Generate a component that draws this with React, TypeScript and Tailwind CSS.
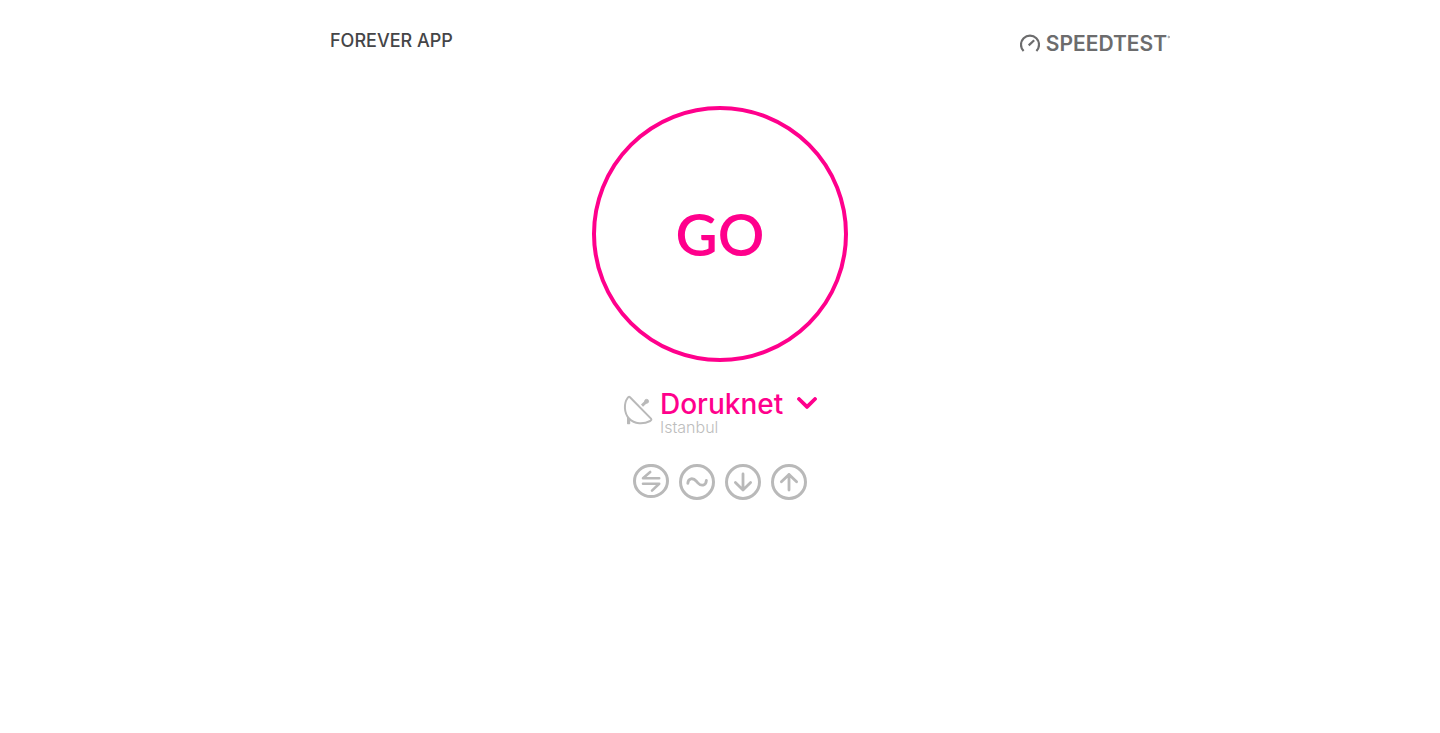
import React, { useState } from 'react';

const servers = [{ id: 'doruknet', name: 'Doruknet', city: 'Istanbul' }];

function GaugeIcon() {
  return (
    <svg className="h-5 w-5" viewBox="0 0 20 20" fill="none" stroke="currentColor" strokeWidth="2.2" aria-hidden="true">
      <path d="M3.6 17A9 9 0 1 1 16.4 17" />
      <path d="M8.7 11.4L14.2 6.2" />
    </svg>
  );
}

function DishIcon() {
  return (
    <svg className="h-8 w-8 text-[#b9b9b9]" viewBox="0 0 32 32" fill="none" stroke="currentColor" aria-hidden="true">
      <path
        d="M9 4.2L30 25.6C30.8 26.6 30.2 27.4 29.2 28C22.5 31.4 13.5 31.4 8 25.5C3 20 2.6 10.5 6.6 5C7.4 3.9 8.1 3.3 9 4.2Z"
        strokeWidth="2"
        strokeLinejoin="round"
      />
      <path d="M6.6 24.5V30.6H8.6V26.5Z" fill="currentColor" strokeWidth="1.2" strokeLinejoin="round" />
      <path d="M21 12.6L25 8.8" strokeWidth="3" />
      <circle cx="25.6" cy="8.3" r="2" fill="currentColor" strokeWidth="0.8" />
    </svg>
  );
}

function ConnectionsIcon() {
  return (
    <svg className="h-9 w-9" viewBox="0 0 36 36" fill="none" stroke="currentColor" role="img" aria-label="Connections">
      <ellipse cx="18" cy="17" rx="16.5" ry="15.6" strokeWidth="3" />
      <path d="M26.2 14.2H10L17.2 8M10 19.8H26.2L19 26.6" strokeWidth="2.6" strokeLinecap="round" strokeLinejoin="round" />
    </svg>
  );
}

const stages = [
  { id: 'ping', label: 'Ping', path: 'M8.8 19.4C9.2 13.8 14.2 13.6 17.4 17.2L18.8 18.8C22 22.4 27 22 27.4 16.4' },
  { id: 'download', label: 'Download', path: 'M18 10V26M10.4 18.6L18 26L25.6 18.6' },
  { id: 'upload', label: 'Upload', path: 'M18 26V10.4M10.4 17.8L18 10.4L25.6 17.8' },
];

export default function App() {
  const [server, setServer] = useState(servers[0]);

  return (
    <div className="min-h-screen bg-white font-['Inter',sans-serif]">
      <header className="mx-auto flex max-w-[900px] items-start justify-between pt-7 pl-15">
        <h1 className="text-lg leading-[26px] font-medium text-[#454547]">FOREVER APP</h1>
        <a href="#" className="flex items-center gap-1.5 pt-[3px] text-[#6c6c6d]">
          <GaugeIcon />
          <span className="flex items-start">
            <span className="text-[21px] leading-[26px] font-semibold">SPEEDTEST</span>
            <svg className="mt-1 h-1 w-[3px]" viewBox="0 0 3 4" fill="none" stroke="currentColor" strokeWidth="0.6" aria-hidden="true">
              <circle cx="1.8" cy="2" r="0.8" />
            </svg>
          </span>
        </a>
      </header>

      <main className="flex flex-col items-center pt-[49px]">
        <button
          type="button"
          className="h-64 w-64 rounded-full border-4 border-[#ff008c] font-['Lato',sans-serif] text-[58px] leading-none font-semibold text-[#ff008c]"
        >
          GO
        </button>

        <div className="mt-7 flex items-start gap-1.5">
          <div className="pt-[3px]">
            <DishIcon />
          </div>
          <div>
            <div className="relative">
              <select
                aria-label="Server"
                value={server.id}
                onChange={(e) => setServer(servers.find((s) => s.id === e.target.value) ?? servers[0])}
                className="block w-40 appearance-none bg-transparent pl-px text-[28px] leading-7 font-medium text-[#ff008c]"
              >
                {servers.map((s) => (
                  <option key={s.id} value={s.id}>
                    {s.name}
                  </option>
                ))}
              </select>
              <svg
                className="pointer-events-none absolute top-[7px] right-0.5 h-3 w-5"
                viewBox="0 0 20 12"
                fill="none"
                stroke="#ff008c"
                strokeWidth="3.8"
                strokeLinecap="round"
                strokeLinejoin="round"
                aria-hidden="true"
              >
                <path d="M2 2L10 9.9L18 2" />
              </svg>
            </div>
            <p className="pl-px text-base leading-[18px] font-light text-[#bdbdbd]">{server.city}</p>
          </div>
        </div>

        <ul className="mt-7 flex gap-[10px] text-[#b9b9b9]">
          <li>
            <ConnectionsIcon />
          </li>
          {stages.map((stage) => (
            <li key={stage.id}>
              <svg className="h-9 w-9" viewBox="0 0 36 36" fill="none" stroke="currentColor" role="img" aria-label={stage.label}>
                <circle cx="18" cy="18" r="16.5" strokeWidth="3" />
                <path d={stage.path} strokeWidth="2.8" strokeLinecap="round" strokeLinejoin="round" />
              </svg>
            </li>
          ))}
        </ul>
      </main>
    </div>
  );
}
